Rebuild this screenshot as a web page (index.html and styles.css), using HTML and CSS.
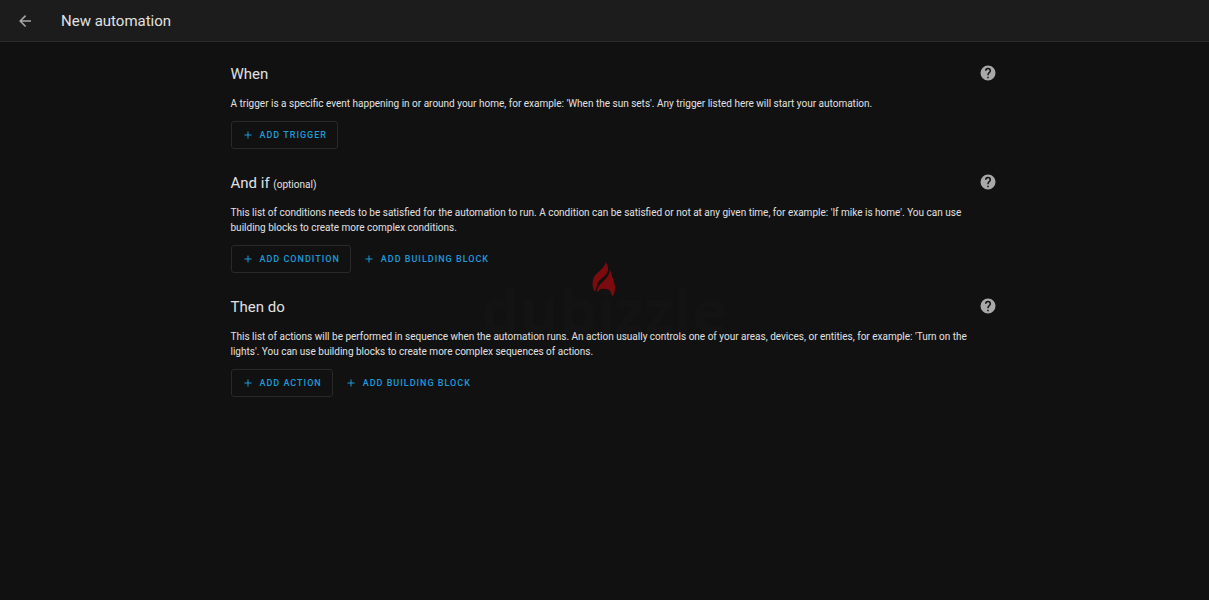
FILE: index.html
```
<!DOCTYPE html>
<html lang="en">
<head>
<meta charset="utf-8">
<title>New automation</title>
<link rel="stylesheet" href="styles.css">
</head>
<body>
<svg class="defs" aria-hidden="true">
  <symbol id="plus" viewBox="0 0 24 24"><path d="M19,13H13V19H11V13H5V11H11V5H13V11H19V13Z"/></symbol>
  <symbol id="help" viewBox="0 0 24 24"><path d="M15.07,11.25L14.17,12.17C13.45,12.89 13,13.5 13,15H11V14.5C11,13.39 11.45,12.39 12.17,11.67L13.41,10.41C13.78,10.05 14,9.55 14,9C14,7.89 13.1,7 12,7A2,2 0 0,0 10,9H8A4,4 0 0,1 12,5A4,4 0 0,1 16,9C16,9.88 15.64,10.67 15.07,11.25M13,19H11V17H13M12,2A10,10 0 0,0 2,12A10,10 0 0,0 12,22A10,10 0 0,0 22,12C22,6.47 17.5,2 12,2Z"/></symbol>
</svg>
<header class="toolbar">
  <button class="icon-button" aria-label="Back"><svg class="icon" viewBox="0 0 24 24"><path d="M20,11V13H8L13.5,18.5L12.08,19.92L4.16,12L12.08,4.08L13.5,5.5L8,11H20Z"/></svg></button>
  <h1 class="title">New automation</h1>
</header>
<main class="content">
  <section class="section">
    <div class="heading">
      <h2 class="name">When</h2>
      <a class="help" href="#trigger" aria-label="Learn about triggers"><svg class="icon"><use href="#help"/></svg></a>
    </div>
    <p class="description">A trigger is a specific event happening in or around your home, for example: 'When the sun sets'. Any trigger listed here will start your automation.</p>
    <div class="actions">
      <button class="button outlined"><svg class="plus"><use href="#plus"/></svg>ADD TRIGGER</button>
    </div>
  </section>
  <section class="section">
    <div class="heading">
      <h2 class="name">And if <small class="optional">(optional)</small></h2>
      <a class="help" href="#condition" aria-label="Learn about conditions"><svg class="icon"><use href="#help"/></svg></a>
    </div>
    <p class="description">This list of conditions needs to be satisfied for the automation to run. A condition can be satisfied or not at any given time, for example: 'If mike is home'. You can use building blocks to create more complex conditions.</p>
    <div class="actions">
      <button class="button outlined"><svg class="plus"><use href="#plus"/></svg>ADD CONDITION</button>
      <button class="button"><svg class="plus"><use href="#plus"/></svg>ADD BUILDING BLOCK</button>
    </div>
  </section>
  <section class="section">
    <div class="heading">
      <h2 class="name">Then do</h2>
      <a class="help" href="#action" aria-label="Learn about actions"><svg class="icon"><use href="#help"/></svg></a>
    </div>
    <p class="description">This list of actions will be performed in sequence when the automation runs. An action usually controls one of your areas, devices, or entities, for example: 'Turn on the lights'. You can use building blocks to create more complex sequences of actions.</p>
    <div class="actions">
      <button class="button outlined"><svg class="plus"><use href="#plus"/></svg>ADD ACTION</button>
      <button class="button"><svg class="plus"><use href="#plus"/></svg>ADD BUILDING BLOCK</button>
    </div>
  </section>
</main>
<div class="watermark">
  <svg class="flame" viewBox="0 0 24 36"><path d="M14 1C16 5 17 8 15 12C12 17 6 18 5 25L3 31C0 27 0 20 2 16C5 11 12 8 14 1Z"/><path d="M18 8C19 14 23 20 23 27C23 31 22 34 20 35C19 31 18 28 14 28C10 27 7 28 6 31L5 30C6 21 17 20 18 8Z"/></svg>
  <span class="brand">dubizzle</span>
</div>
</body>
</html>
```

FILE: styles.css
```
body {
  margin: 0;
  min-height: 100vh;
  background: #111;
  color: #e1e1e1;
  font: 10px/15px Roboto, sans-serif;
}
.defs {
  position: absolute;
  width: 0;
  height: 0;
}
.toolbar {
  display: flex;
  align-items: center;
  gap: 20px;
  height: 41px;
  padding: 0 9px;
  background: #1c1c1c;
  border-bottom: 1px solid #2c2c2c;
}
.icon-button {
  display: flex;
  padding: 7px;
  border: 0;
  background: none;
  color: #a8a8a8;
}
.icon {
  width: 18px;
  height: 18px;
  fill: currentColor;
}
.title {
  margin: 0;
  font-size: 15px;
  font-weight: 400;
  line-height: 20px;
}
.content {
  max-width: 771px;
  margin: 0 auto;
  padding: 19px 0 0 23px;
}
.section {
  margin-bottom: 21px;
}
.heading {
  display: flex;
  align-items: flex-start;
  justify-content: space-between;
  height: 26px;
  padding-right: 5px;
}
.name {
  margin: 0;
  font-size: 15px;
  font-weight: 400;
  line-height: 26px;
}
.optional {
  font-size: 10px;
}
.help {
  display: flex;
  padding-top: 3px;
  color: #a8a8a8;
}
.description {
  margin: 9px 0 10px;
  padding-right: 8px;
}
.actions {
  display: flex;
  gap: 1px;
}
.button {
  display: flex;
  align-items: center;
  gap: 6px;
  height: 28px;
  padding: 0 10px;
  border: 1px solid transparent;
  border-radius: 3px;
  background: none;
  color: #1c9bdb;
  font: 500 9px/14px Roboto, sans-serif;
  letter-spacing: 1px;
}
.outlined {
  border-color: #292929;
}
.plus {
  width: 12px;
  height: 12px;
  fill: currentColor;
}
.watermark {
  position: absolute;
  top: 261px;
  left: 50%;
  transform: translateX(-50%);
  pointer-events: none;
}
.flame {
  position: absolute;
  left: 110px;
  top: 0;
  width: 24px;
  height: 36px;
  fill: #7c0b0d;
}
.brand {
  display: block;
  padding-top: 24px;
  color: rgba(26, 28, 30, 0.25);
  font: 700 60px/50px "Open Sans", sans-serif;
}
```
